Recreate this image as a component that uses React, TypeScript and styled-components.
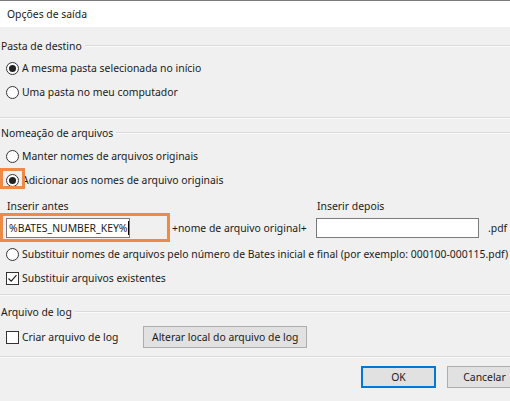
import React from "react";
import styled, { createGlobalStyle } from "styled-components";

const GlobalStyle = createGlobalStyle`
	html, body {
		margin: 0;
		padding: 0;
		background: #f0f0f0;
		overflow: hidden;
	}
	body {
		font-family: "Noto Sans", "Open Sans", sans-serif;
		font-size: 10.4px;
		color: #1a1a1a;
	}
`;

const ORANGE = "#ee8a48";

export default function App() {
	return (
		<>
			<GlobalStyle />
			<Dialog>
				<TitleBar>Opções de saída</TitleBar>
				<Body>
					<Group $top={11} $bottom={13}>
						<Legend>Pasta de destino</Legend>
						<Content $gap={2}>
							<OptionRow>
								<Radio $checked />
								<span>A mesma pasta selecionada no início</span>
							</OptionRow>
							<OptionRow>
								<Radio />
								<span>Uma pasta no meu computador</span>
							</OptionRow>
						</Content>
					</Group>

					<Group $top={7} $bottom={4}>
						<Legend>Nomeação de arquivos</Legend>
						<Content $gap={3}>
							<OptionRow>
								<Radio />
								<span>Manter nomes de arquivos originais</span>
							</OptionRow>
							<OptionRow>
								<Highlighted>
									<Radio $checked />
									<RadioMark />
								</Highlighted>
								<span>Adicionar aos nomes de arquivo originais</span>
							</OptionRow>
							<InsertGrid>
								<FieldLabel>Inserir antes</FieldLabel>
								<span />
								<FieldLabel>Inserir depois</FieldLabel>
								<span />
								<InputWrap>
									<TextInput>
										%BATES_NUMBER_KEY%
										<Caret />
									</TextInput>
									<InputMark />
								</InputWrap>
								<Joiner>+nome de arquivo original+</Joiner>
								<TextInput />
								<Joiner>.pdf</Joiner>
							</InsertGrid>
							<OptionRow>
								<Radio />
								<span>
									Substituir nomes de arquivos pelo número de Bates inicial e
									final (por exemplo: 000100-000115.pdf)
								</span>
							</OptionRow>
							<OptionRow>
								<Checkbox $checked />
								<span>Substituir arquivos existentes</span>
							</OptionRow>
						</Content>
					</Group>

					<Group $top={9} $bottom={7}>
						<Legend>Arquivo de log</Legend>
						<Content $gap={5}>
							<LogRow>
								<OptionRow>
									<Checkbox />
									<span>Criar arquivo de log</span>
								</OptionRow>
								<Button>Alterar local do arquivo de log</Button>
							</LogRow>
						</Content>
					</Group>

					<Footer>
						<Button $primary $wide>
							OK
						</Button>
						<Button $wide>Cancelar</Button>
					</Footer>
				</Body>
			</Dialog>
		</>
	);
}

function Radio({ $checked }: { $checked?: boolean }) {
	return <RadioCircle>{$checked && <RadioDot />}</RadioCircle>;
}

function Checkbox({ $checked }: { $checked?: boolean }) {
	return (
		<CheckBox>
			{$checked && (
				<svg width="11" height="11" viewBox="0 0 11 11">
					<path
						d="M1.5 5.5 L4.2 8.2 L9.5 2.2"
						fill="none"
						stroke="#222"
						strokeWidth="1.2"
					/>
				</svg>
			)}
		</CheckBox>
	);
}

const Dialog = styled.div`
	width: 522px;
	height: 401px;
	border-top: 1px solid #7a7a7a;
	box-sizing: border-box;
	background: #f0f0f0;
`;

const TitleBar = styled.div`
	height: 26px;
	line-height: 26px;
	padding-left: 7px;
	background: #ffffff;
`;

const Body = styled.div`
	display: flex;
	flex-direction: column;
`;

const Group = styled.section<{ $top: number; $bottom: number }>`
	margin-top: ${(p) => p.$top}px;
	padding-bottom: ${(p) => p.$bottom}px;
	border-bottom: 1px solid #dadada;
	box-shadow: 0 1px 0 #fafafa;
`;

const Legend = styled.div`
	display: flex;
	align-items: center;
	height: 16px;
	padding-left: 1px;
	gap: 3px;

	&::after {
		content: "";
		flex: 1;
		border-top: 1px solid #dadada;
		box-shadow: 0 1px 0 #fafafa;
		margin-top: -1px;
	}
`;

const Content = styled.div<{ $gap: number }>`
	display: flex;
	flex-direction: column;
	padding-left: 6px;
	margin-top: ${(p) => p.$gap}px;
`;

const OptionRow = styled.div`
	display: flex;
	align-items: center;
	height: 24px;
	gap: 3px;
	white-space: nowrap;
`;

const RadioCircle = styled.span`
	width: 11px;
	height: 11px;
	border: 1px solid #333;
	border-radius: 50%;
	background: #fff;
	display: flex;
	align-items: center;
	justify-content: center;
	flex-shrink: 0;
`;

const RadioDot = styled.span`
	width: 7px;
	height: 7px;
	border-radius: 50%;
	background: #222;
`;

const CheckBox = styled.span`
	width: 11px;
	height: 11px;
	border: 1px solid #333;
	background: #fff;
	display: flex;
	align-items: center;
	justify-content: center;
	flex-shrink: 0;
`;

const Highlighted = styled.span`
	position: relative;
	display: flex;
`;

const RadioMark = styled.span`
	position: absolute;
	left: -6px;
	top: -6px;
	width: 19px;
	height: 15px;
	border: 3px solid ${ORANGE};
`;

const InsertGrid = styled.div`
	display: grid;
	grid-template-columns: 157px 153px 163px auto;
	grid-template-rows: 22px 28px;
	align-items: center;
`;

const FieldLabel = styled.span`
	padding-left: 1px;
	align-self: end;
	padding-bottom: 1px;
`;

const InputWrap = styled.div`
	position: relative;
	display: flex;
`;

const TextInput = styled.div`
	height: 20px;
	box-sizing: border-box;
	border: 1px solid #7a7a7a;
	background: #fff;
	display: flex;
	align-items: center;
	padding-left: 2px;
	white-space: nowrap;
	overflow: hidden;
`;

const Caret = styled.span`
	width: 1px;
	height: 14px;
	background: #000;
	margin-left: 1px;
`;

const InputMark = styled.span`
	position: absolute;
	left: -6px;
	right: -7px;
	top: -5px;
	bottom: -4px;
	border: 3px solid ${ORANGE};
`;

const Joiner = styled.span`
	padding-left: 9px;
	white-space: nowrap;
`;

const LogRow = styled.div`
	display: grid;
	grid-template-columns: 137px auto;
	align-items: center;
	justify-items: start;
`;

const Button = styled.button<{ $primary?: boolean; $wide?: boolean }>`
	font: inherit;
	color: #1a1a1a;
	height: 22px;
	padding: ${(p) => (p.$wide ? "0" : "0 8px")};
	width: ${(p) => (p.$wide ? "75px" : "auto")};
	background: #e1e1e1;
	border: 1px solid ${(p) => (p.$primary ? "#0078d7" : "#adadad")};
	box-shadow: ${(p) => (p.$primary ? "inset 0 0 0 1px #0078d7" : "none")};
	white-space: nowrap;
`;

const Footer = styled.div`
	display: flex;
	justify-content: flex-end;
	gap: 11px;
	margin-top: 9px;
`;
